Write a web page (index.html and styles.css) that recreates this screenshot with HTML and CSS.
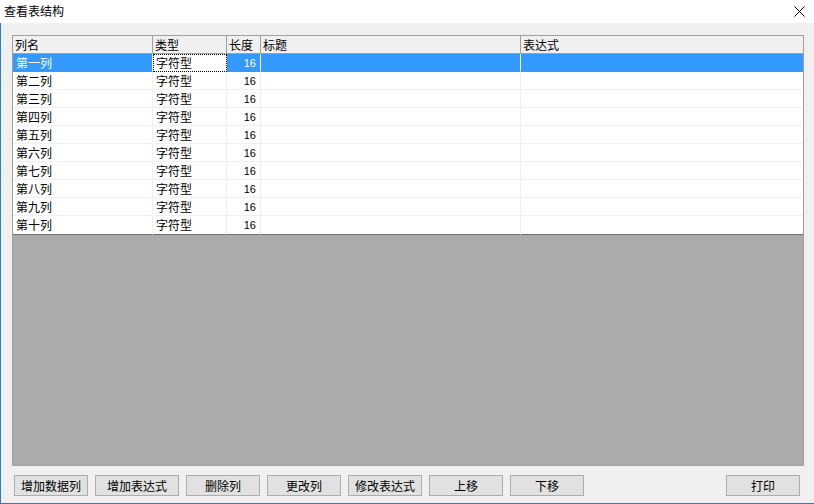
FILE: index.html
```html
<!DOCTYPE html>
<html lang="zh-CN">
<head>
  <meta charset="UTF-8">
  <title>查看表结构</title>
  <link rel="stylesheet" href="styles.css">
</head>
<body>
  <div class="window">
    <!-- Title bar -->
    <div class="titlebar">
      <span class="title">查看表结构</span>
      <svg class="close" width="11" height="11" viewBox="0 0 11 11">
        <path d="M0.5 0.5L10.5 10.5M10.5 0.5L0.5 10.5" stroke="#000" stroke-width="1" fill="none"/>
      </svg>
    </div>

    <div class="content">
      <!-- Column grid -->
      <div class="grid">
        <div class="row head">
          <div class="cell">列名</div>
          <div class="cell">类型</div>
          <div class="cell">长度</div>
          <div class="cell">标题</div>
          <div class="cell">表达式</div>
        </div>
        <div class="row selected">
          <div class="cell">第一列</div>
          <div class="cell focus">字符型</div>
          <div class="cell num">16</div>
          <div class="cell"></div>
          <div class="cell"></div>
        </div>
        <div class="row">
          <div class="cell">第二列</div>
          <div class="cell">字符型</div>
          <div class="cell num">16</div>
          <div class="cell"></div>
          <div class="cell"></div>
        </div>
        <div class="row">
          <div class="cell">第三列</div>
          <div class="cell">字符型</div>
          <div class="cell num">16</div>
          <div class="cell"></div>
          <div class="cell"></div>
        </div>
        <div class="row">
          <div class="cell">第四列</div>
          <div class="cell">字符型</div>
          <div class="cell num">16</div>
          <div class="cell"></div>
          <div class="cell"></div>
        </div>
        <div class="row">
          <div class="cell">第五列</div>
          <div class="cell">字符型</div>
          <div class="cell num">16</div>
          <div class="cell"></div>
          <div class="cell"></div>
        </div>
        <div class="row">
          <div class="cell">第六列</div>
          <div class="cell">字符型</div>
          <div class="cell num">16</div>
          <div class="cell"></div>
          <div class="cell"></div>
        </div>
        <div class="row">
          <div class="cell">第七列</div>
          <div class="cell">字符型</div>
          <div class="cell num">16</div>
          <div class="cell"></div>
          <div class="cell"></div>
        </div>
        <div class="row">
          <div class="cell">第八列</div>
          <div class="cell">字符型</div>
          <div class="cell num">16</div>
          <div class="cell"></div>
          <div class="cell"></div>
        </div>
        <div class="row">
          <div class="cell">第九列</div>
          <div class="cell">字符型</div>
          <div class="cell num">16</div>
          <div class="cell"></div>
          <div class="cell"></div>
        </div>
        <div class="row last">
          <div class="cell">第十列</div>
          <div class="cell">字符型</div>
          <div class="cell num">16</div>
          <div class="cell"></div>
          <div class="cell"></div>
        </div>
      </div>

      <!-- Buttons -->
      <div class="buttons">
        <button class="btn">增加数据列</button>
        <button class="btn wide">增加表达式</button>
        <button class="btn">删除列</button>
        <button class="btn">更改列</button>
        <button class="btn">修改表达式</button>
        <button class="btn">上移</button>
        <button class="btn">下移</button>
        <button class="btn print">打印</button>
      </div>
    </div>
  </div>
</body>
</html>
```

FILE: styles.css
```css
* {
  margin: 0;
  padding: 0;
  box-sizing: border-box;
}

body {
  font-family: "Noto Sans CJK SC", "Liberation Sans", sans-serif;
  font-size: 12px;
  color: #000;
  background-color: #f0f0f0;
  width: 814px;
  height: 504px;
  overflow: hidden;
}

.window {
  height: 504px;
  display: flex;
  flex-direction: column;
}

/* Title bar */
.titlebar {
  height: 23px;
  background-color: #fff;
  display: flex;
  align-items: center;
  justify-content: space-between;
  padding: 0 9px 2px 4px;
}

.title {
  font-size: 12px;
  line-height: 16px;
}

.close {
  margin-top: 1px;
}

/* Main area */
.content {
  flex: 1;
  background-color: #f0f0f0;
  border-left: 1px solid #2b7bd4;
  border-bottom: 1px solid #2b7bd4;
  padding: 12px 10px 0 11px;
  display: flex;
  flex-direction: column;
}

.grid {
  height: 431px;
  border: 1px solid #a0a0a0;
  background-color: #ababab;
}

.row {
  display: grid;
  grid-template-columns: 140px 74px 34px 260px 1fr;
  height: 18px;
  background-color: #fff;
}

.cell {
  border-right: 1px solid #f0f0f0;
  border-bottom: 1px solid #f0f0f0;
  padding-left: 3px;
  line-height: 17px;
  white-space: nowrap;
  overflow: hidden;
}

.cell:last-child {
  border-right: none;
}

.cell.num {
  text-align: right;
  padding: 1px 4px 0 0;
  font-family: "Liberation Sans", sans-serif;
  font-size: 11px;
}

.row.head {
  background-color: #f0f0f0;
}

.row.head .cell {
  border-right-color: #a0a0a0;
  border-bottom-color: #a0a0a0;
  padding-left: 2px;
}

.row.selected {
  background-color: #3399ff;
  color: #fff;
}

.row.selected .cell {
  border-bottom-color: #3399ff;
  border-right-color: #fff;
}

.row.selected .cell.focus {
  background-color: #fff;
  color: #000;
  border: 1px dotted #000;
  line-height: 16px;
  padding-left: 2px;
}

.row.last {
  height: 19px;
}

.row.last .cell {
  border-bottom: 1px solid #6e6e6e;
}

/* Buttons */
.buttons {
  display: flex;
  gap: 7px;
  margin: 9px 4px 0 2px;
}

.btn {
  width: 74px;
  height: 21px;
  background-color: #e1e1e1;
  border: 1px solid #adadad;
  font-family: "Noto Sans CJK SC", sans-serif;
  font-size: 12px;
  color: #000;
  line-height: 18px;
}

.btn.wide {
  width: 84px;
}

.btn.print {
  margin-left: auto;
}
```
